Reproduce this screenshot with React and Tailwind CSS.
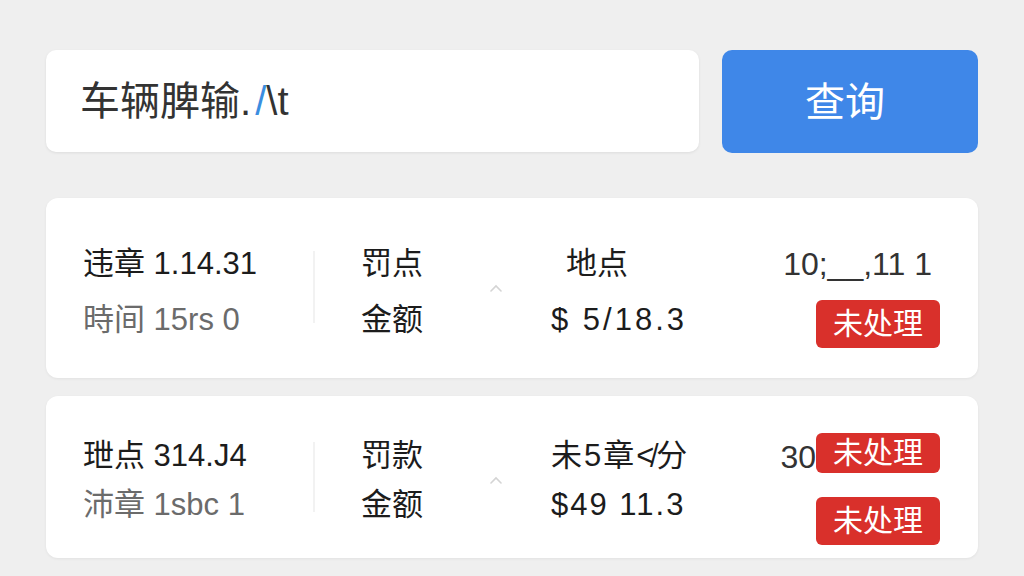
import React from "react";

const font = { fontFamily: '"Liberation Sans", "Noto Sans CJK SC", sans-serif' };

function Caret() {
  return (
    <svg width="14" height="8" viewBox="0 0 14 8" className="block">
      <path d="M2 7 L7 2 L12 7" fill="none" stroke="#d4d4d4" strokeWidth="1.6" strokeLinecap="round" />
    </svg>
  );
}

function Badge({ className = "" }) {
  return (
    <span className={"inline-flex items-center justify-center rounded-[6px] bg-[#d9302b] text-white text-[30px] leading-none px-[17px] " + className}>
      未处理
    </span>
  );
}

export default function App() {
  return (
    <div className="w-[1024px] h-[576px] bg-[#efefef] px-[46px] pt-[50px] overflow-hidden" style={font}>
      <div className="flex gap-[23px]">
        <div className="w-[653px] h-[102px] bg-white rounded-[10px] shadow-[0_1px_3px_rgba(0,0,0,0.08)] flex items-center pl-[34px] text-[40px] text-[#333]">
          <span>车辆脾输.</span>
          <span className="text-[#3b8ee0] ml-[4px]">/</span>
          <span>{"\\"}</span>
          <span>t</span>
        </div>
        <div className="w-[256px] h-[103px] bg-[#3f87e8] rounded-[10px] flex items-center justify-center pr-[10px] text-white text-[40px]">
          查询
        </div>
      </div>

      <div className="mt-[45px] h-[180px] bg-white rounded-[12px] shadow-[0_1px_3px_rgba(0,0,0,0.06)] flex pl-[37px] pr-[38px] pt-[38px] text-[31px] text-[#1c1c1c]">
        <div className="w-[230px] flex flex-col">
          <div className="h-[56px] flex items-center">违章 1.14.31</div>
          <div className="h-[56px] flex items-center text-[#6b6b6b]">時间 15rs 0</div>
        </div>
        <div className="w-[2px] h-[72px] mt-[15px] bg-[#f2f2f2]" />
        <div className="ml-[46px] w-[190px] flex flex-col relative">
          <div className="h-[56px] flex items-center">罚点</div>
          <div className="h-[56px] flex items-center">金额</div>
          <div className="absolute left-[128px] top-[48px]"><Caret /></div>
        </div>
        <div className="flex-1 flex flex-col">
          <div className="h-[56px] flex items-center pl-[15px]">地点</div>
          <div className="h-[56px] flex items-center tracking-[3px]">$ 5/18.3</div>
        </div>
        <div className="flex flex-col items-end">
          <div className="h-[56px] flex items-center text-[32px] text-[#333] mr-[8px]">10;__,11 1</div>
          <div className="h-[56px] flex items-center pt-[8px]"><Badge className="h-[48px]" /></div>
        </div>
      </div>

      <div className="mt-[18px] h-[162px] bg-white rounded-[12px] shadow-[0_1px_3px_rgba(0,0,0,0.06)] flex pl-[37px] pr-[38px] pt-[36px] text-[31px] text-[#1c1c1c]">
        <div className="w-[230px] flex flex-col">
          <div className="h-[49px] flex items-center">玴点 314.J4</div>
          <div className="h-[49px] flex items-center text-[#6b6b6b]">沛章 1sbc 1</div>
        </div>
        <div className="w-[2px] h-[70px] mt-[10px] bg-[#f2f2f2]" />
        <div className="ml-[46px] w-[190px] flex flex-col relative">
          <div className="h-[49px] flex items-center">罚款</div>
          <div className="h-[49px] flex items-center">金额</div>
          <div className="absolute left-[128px] top-[44px]"><Caret /></div>
        </div>
        <div className="flex-1 flex flex-col">
          <div className="h-[49px] flex items-center tracking-[2px]">未5章≮分</div>
          <div className="h-[49px] flex items-center tracking-[2px]">$49 11.3</div>
        </div>
        <div className="flex flex-col items-end">
          <div className="h-[49px] flex items-start pt-[1px] text-[32px] text-[#333]">
            30<Badge className="h-[40px]" />
          </div>
          <div className="h-[49px] flex items-center pt-[30px]"><Badge className="h-[48px]" /></div>
        </div>
      </div>
    </div>
  );
}
